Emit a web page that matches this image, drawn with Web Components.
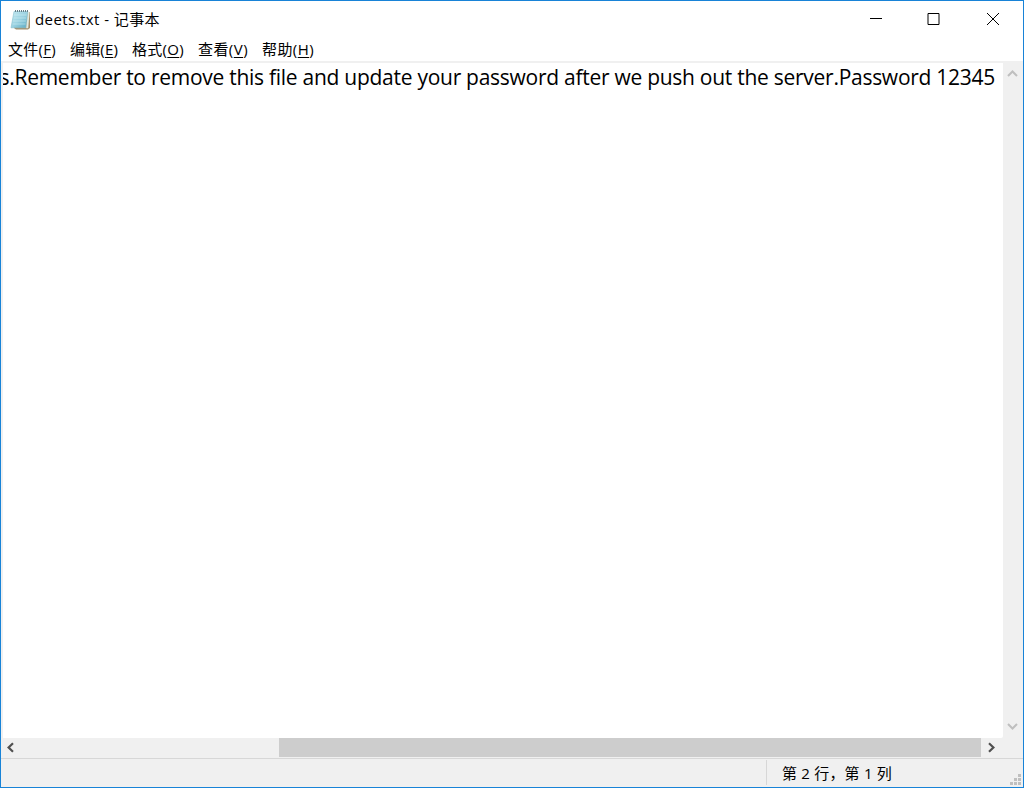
<!DOCTYPE html>
<html lang="zh-CN"><head><meta charset="utf-8"><title>deets.txt - 记事本</title>
<style>html,body{margin:0;width:1024px;height:788px;overflow:hidden;background:#fff}</style></head>
<body>
<note-window></note-window>
<script>
const define = (name, html, setup) => customElements.define(name, class extends HTMLElement {
  connectedCallback() {
    if (this.shadowRoot) return;
    const root = this.attachShadow({mode: 'open'});
    root.innerHTML = html;
    if (setup) setup(this, root);
  }
});

// A single line of text whose tracking is adjusted to a given advance width.
define('fit-text', `<style>:host{display:block;white-space:pre;flex:none}span{display:inline-block}</style><span><slot></slot></span>`, (el, root) => {
  const span = root.querySelector('span'), target = +el.getAttribute('width');
  const n = [...el.textContent].length;
  el.style.width = target + 'px';
  const w = span.getBoundingClientRect().width;
  span.style.letterSpacing = ((target - w) / n) + 'px';
});

define('title-bar', `<style>
:host{display:flex;height:37px;align-items:center;padding-left:9px;box-sizing:border-box;font-size:15px}
.icon{width:22px;height:22px;flex:none;margin-right:3px}
fit-text{padding-bottom:2px}
.space{flex:1}
.controls{display:flex;height:37px;margin-right:1px}.controls svg{width:58.5px;height:37px}
</style>
<svg class="icon" viewBox="0 0 22 22"><defs><linearGradient id="g" x1="0" y1="0" x2="1" y2="1"><stop offset="0" stop-color="#c5e8f0"/><stop offset=".5" stop-color="#9bd2e1"/><stop offset="1" stop-color="#5ba9c2"/></linearGradient></defs>
<path d="M7 3H20V19L18 20.5H6L4 19Z" fill="#a58f6c"/><path d="M4 2.5H18L16 18.8H1Z" fill="url(#g)" stroke="#84bfce" stroke-width=".6"/><path d="M18 3H19.6L18.2 19.3H16.2Z" fill="#dfe9e2"/><path d="M4 6H16.5M3.6 9H16M3 12H15.8M2.6 15H15.5" stroke="#d4f0f5" stroke-width=".5"/><path d="M5 2H18.5" stroke="#687f88" stroke-width="2" stroke-dasharray="1 1"/></svg>
<fit-text width="125">deets.txt - 记事本</fit-text><div class="space"></div>
<div class="controls"><svg viewBox="0 0 58.5 37"><path d="M23 17H35V18H23Z"/></svg><svg viewBox="0 0 58.5 37"><path d="M23 12.5H34V23.5H23Z" fill="none" stroke="#000"/></svg><svg viewBox="0 0 58.5 37"><path d="M23 12L35 24M35 12L23 24" stroke="#000"/></svg></div>`);

define('menu-bar', `<style>:host{display:flex;height:23px;padding-left:7px;gap:14px;font-size:15px;line-height:23px}u{text-underline-offset:2px;text-decoration-thickness:1px}</style>
<fit-text width="48">文件(<u>F</u>)</fit-text><fit-text width="48">编辑(<u>E</u>)</fit-text><fit-text width="52">格式(<u>O</u>)</fit-text><fit-text width="50">查看(<u>V</u>)</fit-text><fit-text width="52">帮助(<u>H</u>)</fit-text>`);

define('text-area', `<style>:host{display:flex;justify-content:flex-end;margin-left:2px;padding-right:8px;overflow:hidden;background:#fff;font-size:21px;line-height:28px;align-items:flex-start;border-bottom-right-radius:2px}</style>
<fit-text width="995.5">s.Remember to remove this file and update your password after we push out the server.Password 12345</fit-text>`);

define('scroll-bar', `<style>:host{display:flex;background:#f0f0f0}
:host([vertical]){flex-direction:column;justify-content:space-between}svg{width:20px;height:20px;flex:none}.thumb{width:702px;margin-left:258px}:host([vertical]) .thumb{display:none}.thumb{background:#cdcdcd;height:19px}</style>
<svg viewBox="0 0 20 20"><path/></svg><div class="thumb"></div><svg viewBox="0 0 20 20"><path/></svg>`, (el, root) => {
  const v = el.hasAttribute('vertical'), p = root.querySelectorAll('path');
  p[0].setAttribute('d', v ? 'M5 13L9.5 8.5L14 13' : 'M12 5.3L7.6 9.5L12 13.7');
  p[1].setAttribute('d', v ? 'M5 6L9.5 10.5L14 6' : 'M8 5.3L12.4 9.5L8 13.7');
  p.forEach(x => { x.setAttribute('fill', 'none'); x.setAttribute('stroke', v ? '#bfbfbf' : '#505050'); x.setAttribute('stroke-width', v ? '2' : '2.2'); });
});

define('status-bar', `<style>:host{display:flex;box-sizing:border-box;height:29px;background:#f0f0f0;border-top:1px solid #d7d7d7;font-size:15px}
.blank{width:765px;border-right:1px solid #d7d7d7;margin:1px 0 2px}.pos{flex:1;padding-left:15px;line-height:29px}svg{width:13px;height:13px;align-self:flex-end;margin-bottom:0}</style>
<div class="blank"></div><div class="pos"><fit-text width="110">第 2 行，第 1 列</fit-text></div>
<svg viewBox="0 0 13 13" fill="#bfbfbf"><path d="M8 0h3v3h-3zM4 4h3v3h-3zM8 4h3v3h-3zM0 8h3v3h-3zM4 8h3v3h-3zM8 8h3v3h-3z"/></svg>`);

define('note-window', `<style>:host{display:grid;grid-template-rows:37px 23px 2px 1fr 29px;box-sizing:border-box;width:1024px;height:788px;border:1px solid #1883d7;background:#fff;color:#000;font-family:"Open Sans","Noto Sans CJK SC",sans-serif}
.line{background:#f0f0f0}.body{display:grid;grid-template-columns:1002px 20px;grid-template-rows:675px 20px;background:#f0f0f0}.white{background:#f0f0f0;display:grid}scroll-bar:not([vertical]){min-width:0}</style>
<title-bar></title-bar><menu-bar></menu-bar><div class="line"></div>
<div class="body"><div class="white"><text-area></text-area></div><scroll-bar vertical></scroll-bar><scroll-bar></scroll-bar><div></div></div><status-bar></status-bar>`);
</script></body></html>
